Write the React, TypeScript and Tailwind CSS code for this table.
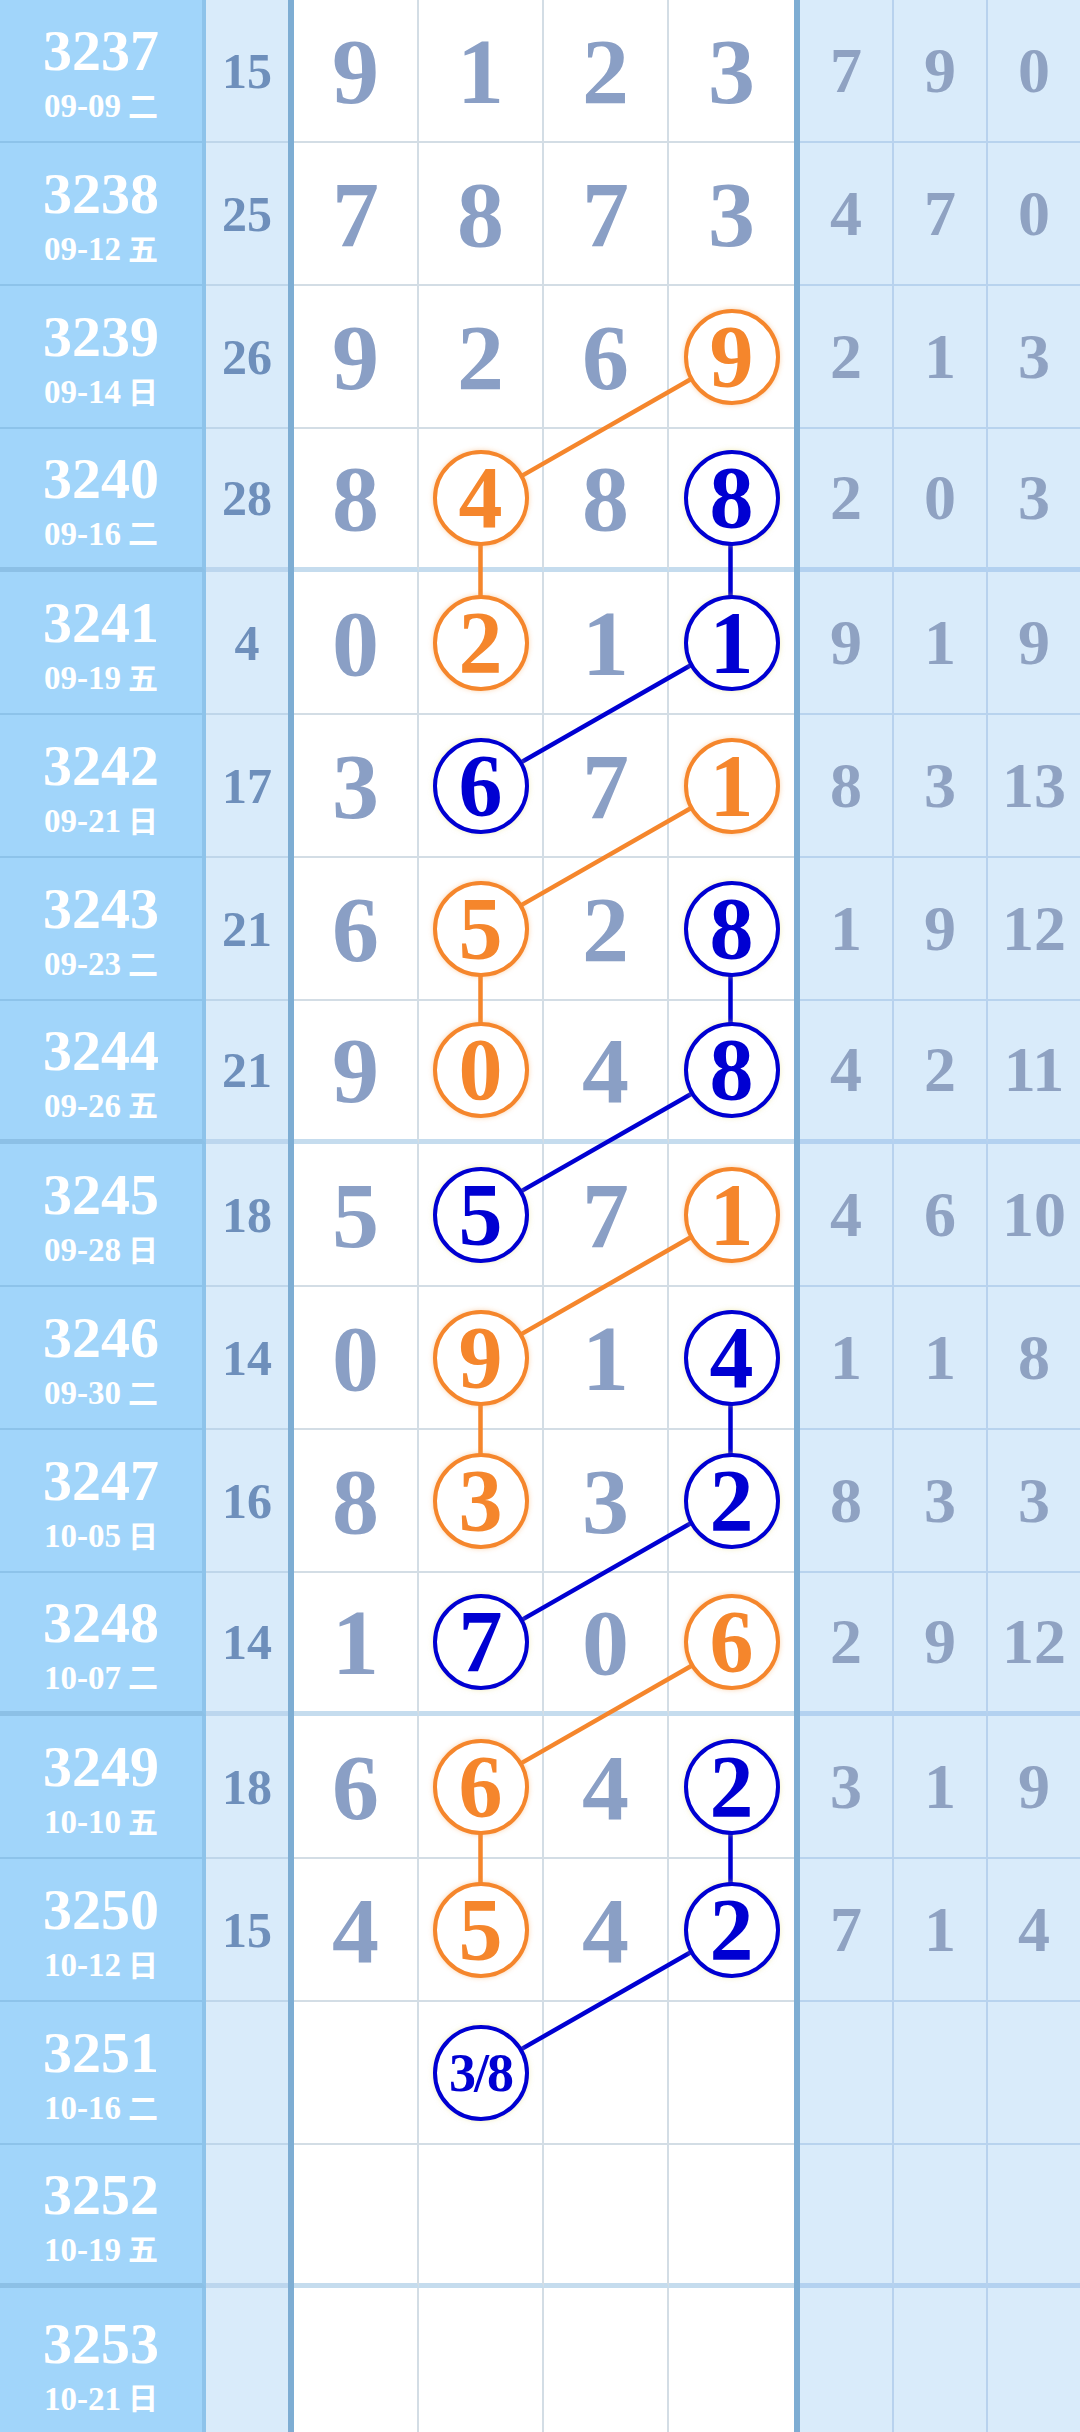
type Mark = { col: number; c: 'o' | 'b'; text?: string };
type Row = {
  no: string;
  date: string;
  wd: string;
  sum?: string;
  d?: (number | null)[];
  r?: string[];
  marks?: Mark[];
};

const rows: Row[] = [
  { no: '3237', date: '09-09', wd: '二', sum: '15', d: [9, 1, 2, 3], r: ['7', '9', '0'] },
  { no: '3238', date: '09-12', wd: '五', sum: '25', d: [7, 8, 7, 3], r: ['4', '7', '0'] },
  { no: '3239', date: '09-14', wd: '日', sum: '26', d: [9, 2, 6, 9], r: ['2', '1', '3'], marks: [{ col: 3, c: 'o' }] },
  { no: '3240', date: '09-16', wd: '二', sum: '28', d: [8, 4, 8, 8], r: ['2', '0', '3'], marks: [{ col: 1, c: 'o' }, { col: 3, c: 'b' }] },
  { no: '3241', date: '09-19', wd: '五', sum: '4', d: [0, 2, 1, 1], r: ['9', '1', '9'], marks: [{ col: 1, c: 'o' }, { col: 3, c: 'b' }] },
  { no: '3242', date: '09-21', wd: '日', sum: '17', d: [3, 6, 7, 1], r: ['8', '3', '13'], marks: [{ col: 1, c: 'b' }, { col: 3, c: 'o' }] },
  { no: '3243', date: '09-23', wd: '二', sum: '21', d: [6, 5, 2, 8], r: ['1', '9', '12'], marks: [{ col: 1, c: 'o' }, { col: 3, c: 'b' }] },
  { no: '3244', date: '09-26', wd: '五', sum: '21', d: [9, 0, 4, 8], r: ['4', '2', '11'], marks: [{ col: 1, c: 'o' }, { col: 3, c: 'b' }] },
  { no: '3245', date: '09-28', wd: '日', sum: '18', d: [5, 5, 7, 1], r: ['4', '6', '10'], marks: [{ col: 1, c: 'b' }, { col: 3, c: 'o' }] },
  { no: '3246', date: '09-30', wd: '二', sum: '14', d: [0, 9, 1, 4], r: ['1', '1', '8'], marks: [{ col: 1, c: 'o' }, { col: 3, c: 'b' }] },
  { no: '3247', date: '10-05', wd: '日', sum: '16', d: [8, 3, 3, 2], r: ['8', '3', '3'], marks: [{ col: 1, c: 'o' }, { col: 3, c: 'b' }] },
  { no: '3248', date: '10-07', wd: '二', sum: '14', d: [1, 7, 0, 6], r: ['2', '9', '12'], marks: [{ col: 1, c: 'b' }, { col: 3, c: 'o' }] },
  { no: '3249', date: '10-10', wd: '五', sum: '18', d: [6, 6, 4, 2], r: ['3', '1', '9'], marks: [{ col: 1, c: 'o' }, { col: 3, c: 'b' }] },
  { no: '3250', date: '10-12', wd: '日', sum: '15', d: [4, 5, 4, 2], r: ['7', '1', '4'], marks: [{ col: 1, c: 'o' }, { col: 3, c: 'b' }] },
  { no: '3251', date: '10-16', wd: '二', marks: [{ col: 1, c: 'b', text: '3/8' }] },
  { no: '3252', date: '10-19', wd: '五' },
  { no: '3253', date: '10-21', wd: '日' },
];

// [row, col] -> [row, col]
const links: { c: 'o' | 'b'; a: [number, number]; b: [number, number] }[] = [
  { c: 'o', a: [2, 3], b: [3, 1] },
  { c: 'o', a: [3, 1], b: [4, 1] },
  { c: 'o', a: [5, 3], b: [6, 1] },
  { c: 'o', a: [6, 1], b: [7, 1] },
  { c: 'o', a: [8, 3], b: [9, 1] },
  { c: 'o', a: [9, 1], b: [10, 1] },
  { c: 'o', a: [11, 3], b: [12, 1] },
  { c: 'o', a: [12, 1], b: [13, 1] },
  { c: 'b', a: [3, 3], b: [4, 3] },
  { c: 'b', a: [4, 3], b: [5, 1] },
  { c: 'b', a: [6, 3], b: [7, 3] },
  { c: 'b', a: [7, 3], b: [8, 1] },
  { c: 'b', a: [9, 3], b: [10, 3] },
  { c: 'b', a: [10, 3], b: [11, 1] },
  { c: 'b', a: [12, 3], b: [13, 3] },
  { c: 'b', a: [13, 3], b: [14, 1] },
];

const ROW_H = 143;
const COL_W = 125;
const ORANGE = '#f5862c';
const BLUE = '#0000d2';

const serif = { fontFamily: '"Liberation Serif", "Noto Sans CJK SC", serif' };

function Circle({ c, text }: { c: 'o' | 'b'; text: string }) {
  const small = text.length > 1;
  return (
    <div
      className={
        'relative z-10 flex h-[96px] w-[96px] items-center justify-center rounded-full border-[4px] bg-white font-bold leading-none ' +
        (c === 'o'
          ? 'border-[#f5862c] text-[#f5862c] shadow-[0_0_5px_rgba(245,160,80,0.45)]'
          : 'border-[#0000d2] text-[#0000d2] shadow-[0_0_5px_rgba(230,220,120,0.5)]')
      }
    >
      <span className={small ? 'text-[54px] tracking-[-2px]' : 'text-[88px]'}>{text}</span>
    </div>
  );
}

export default function App() {
  return (
    <div className="relative w-[1080px] overflow-hidden bg-white" style={serif}>
      {rows.map((row, i) => {
        const thick = i % 4 === 3;
        const last = i === rows.length - 1;
        const hb = last ? 'border-b-0' : thick ? 'border-b-[5px]' : 'border-b-2';
        return (
          <div key={row.no} className={'flex ' + (last ? 'h-[150px]' : 'h-[143px]')}>
            {/* issue + date */}
            <div
              className={
                'flex w-[206px] flex-col items-center justify-center border-r-[4px] border-r-[#8ec3ea] bg-[#a1d5fa] font-bold text-white ' +
                hb +
                (thick ? ' border-b-[#8cc0e6]' : ' border-b-[#8dc3ea]')
              }
            >
              <div className="mt-[4px] text-[58px] leading-none">{row.no}</div>
              <div className="mt-[10px] flex items-center gap-[7px] text-[33px] leading-none">
                <span>{row.date}</span>
                <span className="text-[30px]">{row.wd}</span>
              </div>
            </div>

            {/* sum */}
            <div
              className={
                'flex w-[82px] items-center justify-center bg-[#d9ebfa] text-[50px] font-bold leading-none text-[#6e8fbb] ' +
                hb +
                (thick ? ' border-b-[#bcd6ee]' : ' border-b-[#bfd6ea]')
              }
            >
              {row.sum}
            </div>

            <div className="w-[6px] bg-[#7eadd3]" />

            {/* digits */}
            {[0, 1, 2, 3].map((c) => {
              const mark = row.marks?.find((m) => m.col === c);
              const v = row.d?.[c];
              return (
                <div
                  key={c}
                  className={
                    'flex w-[125px] items-center justify-center bg-white ' +
                    (c < 3 ? 'border-r-2 border-r-[#d3dde5] ' : '') +
                    hb +
                    (thick ? ' border-b-[#c5dcee]' : ' border-b-[#d3dde5]')
                  }
                >
                  {mark ? (
                    <Circle c={mark.c} text={mark.text ?? String(v)} />
                  ) : v !== undefined && v !== null ? (
                    <span className="text-[94px] font-bold leading-none text-[#8a9fc5]">{v}</span>
                  ) : null}
                </div>
              );
            })}

            <div className="w-[6px] bg-[#7eadd3]" />

            {/* right stats */}
            {[0, 1, 2].map((c) => (
              <div
                key={c}
                className={
                  'flex flex-1 items-center justify-center bg-[#d9ebfa] ' +
                  (c < 2 ? 'border-r-2 border-r-[#b8d2ee] ' : '') +
                  hb +
                  (thick ? ' border-b-[#b3d1f0]' : ' border-b-[#b8d3ee]')
                }
              >
                <span className="text-[64px] font-bold leading-none text-[#8fa2c2]">{row.r?.[c]}</span>
              </div>
            ))}
          </div>
        );
      })}

      {/* trend lines */}
      <svg
        className="pointer-events-none absolute left-[294px] top-0"
        width={500}
        height={ROW_H * rows.length}
      >
        {links.map((l, k) => (
          <line
            key={k}
            x1={COL_W * l.a[1] + COL_W / 2 - 1}
            y1={ROW_H * l.a[0] + ROW_H / 2 - 1}
            x2={COL_W * l.b[1] + COL_W / 2 - 1}
            y2={ROW_H * l.b[0] + ROW_H / 2 - 1}
            stroke={l.c === 'o' ? ORANGE : BLUE}
            strokeWidth={4.5}
          />
        ))}
      </svg>
    </div>
  );
}
